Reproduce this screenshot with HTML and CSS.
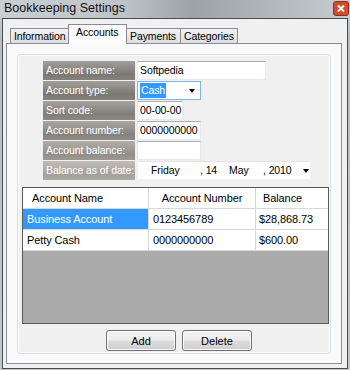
FILE: index.html
```html
<!DOCTYPE html>
<html lang="en">
<head>
    <meta charset="UTF-8">
    <title>Bookkeeping Settings</title>
    <link rel="stylesheet" href="styles.css">
</head>
<body>
    <div class="window">
        <div class="titlebar">
            <div class="title">Bookkeeping Settings</div>
            <div class="close">
                <svg width="8" height="7" viewBox="0 0 8 7">
                    <path d="M1 0.5 L7 6.5 M7 0.5 L1 6.5" stroke="#fff" stroke-width="2"/>
                </svg>
            </div>
        </div>
        <div class="frame">
            <div class="tabs">
                <div class="tab t-info">Information</div>
                <div class="tab t-acc active">Accounts</div>
                <div class="tab t-pay">Payments</div>
                <div class="tab t-cat">Categories</div>
            </div>
            <div class="page">
                <div class="group">
                    <div class="fields">
                        <div class="label l1">Account name:</div>
                        <div class="cell"><div class="input w-name">Softpedia</div></div>

                        <div class="label l2">Account type:</div>
                        <div class="cell">
                            <div class="input select">
                                <span class="sel">Cash</span>
                                <span class="arrow"></span>
                            </div>
                        </div>

                        <div class="label l3">Sort code:</div>
                        <div class="cell"><div class="input w-sort">00-00-00</div></div>

                        <div class="label l4">Account number:</div>
                        <div class="cell"><div class="input w-num">0000000000</div></div>

                        <div class="label l5">Account balance:</div>
                        <div class="cell"><div class="input w-num"></div></div>

                        <div class="label l6">Balance as of date:</div>
                        <div class="cell">
                            <div class="input date">
                                <span class="d-day">Friday</span>
                                <span class="d-num">, 14</span>
                                <span class="d-mon">May</span>
                                <span class="d-year">, 2010</span>
                                <span class="arrow"></span>
                            </div>
                        </div>
                    </div>

                    <div class="grid">
                        <div class="row head">
                            <div class="c c1">Account Name</div>
                            <div class="c c2 center">Account Number</div>
                            <div class="c c3">Balance</div>
                        </div>
                        <div class="row">
                            <div class="c c1 selected">Business Account</div>
                            <div class="c c2">0123456789</div>
                            <div class="c c3">$28,868.73</div>
                        </div>
                        <div class="row">
                            <div class="c c1">Petty Cash</div>
                            <div class="c c2">0000000000</div>
                            <div class="c c3">$600.00</div>
                        </div>
                        <div class="empty"></div>
                    </div>

                    <div class="buttons">
                        <button class="btn">Add</button>
                        <button class="btn">Delete</button>
                    </div>
                </div>
            </div>
        </div>
    </div>
</body>
</html>
```

FILE: styles.css
```css
*{
    margin: 0;
    padding: 0;
    box-sizing: border-box;
}
body{
    width: 350px;
    height: 370px;
    font-family: "Liberation Sans", Arial, sans-serif;
    font-size: 10.5px;
    letter-spacing: -0.1px;
    color: #000;
    background: #c4c9ce;
}
.window{
    width: 350px;
    height: 370px;
    background: linear-gradient(180deg, #cdd2d7, #b9bec4 40px, #c2c7cc);
    display: flex;
    flex-direction: column;
}
.titlebar{
    height: 18px;
    display: flex;
    justify-content: space-between;
    align-items: flex-start;
    padding-left: 4px;
    background: linear-gradient(90deg, #c9ced3 0%, #bfc4c9 35%, #9ca2a8 55%, #aab0b6 70%, #c7ccd1 100%);
}
.title{
    font-size: 12.5px;
    letter-spacing: 0;
    line-height: 17px;
    color: #111;
}
.close{
    flex: 0 0 16px;
    height: 15px;
    margin-top: 1px;
    margin-right: 1px;
    border: 1px solid #8a2f1f;
    border-radius: 3px;
    background-color: #d24b2e;
    display: flex;
    align-items: center;
    justify-content: center;
}
.frame{
    height: 351px;
    margin: 0 2px;
    border: 1px solid #4c4c4c;
    background: #f0f0f0;
    padding: 5px 5px 4px 3px;
    display: flex;
    flex-direction: column;
}
.tabs{
    display: flex;
    align-items: flex-end;
    padding-left: 4px;
    height: 19px;
    position: relative;
    z-index: 1;
}
.tab{
    height: 15px;
    border: 1px solid #898c95;
    border-bottom: none;
    border-right: none;
    background: linear-gradient(180deg, #f2f2f2, #dedede);
    line-height: 14px;
    padding-left: 3px;
}
.t-info{ width: 58px; }
.t-acc{ width: 59px; }
.t-pay{ width: 53px; }
.t-cat{ width: 58px; border-right: 1px solid #898c95; }
.tab.active{
    height: 20px;
    background: #fcfcfc;
    border-right: 1px solid #898c95;
    margin-bottom: -1px;
    padding-left: 7px;
    line-height: 15px;
}
.tab.active + .tab{ border-left: none; }
.page{
    flex: 1;
    border: 1px solid #898c95;
    background: #fafafa;
    padding: 10px 10px 9px 10px;
    display: flex;
}
.group{
    flex: 1;
    border: 1px solid #d5dfe5;
    border-radius: 3px;
    box-shadow: inset 0 0 0 1px #fff;
    background: #f0f0f0;
    padding: 6px 0 0 4px;
    display: flex;
    flex-direction: column;
}
.fields{
    margin-left: 21px;
    display: grid;
    grid-template-columns: 92px 174px;
    grid-auto-rows: 19px;
    row-gap: 1px;
    column-gap: 2px;
}
.label{
    color: #fff;
    padding-left: 3px;
    line-height: 19px;
    white-space: nowrap;
    overflow: hidden;
}
.l1{ background: linear-gradient(180deg, #a29e9a, #7b7773 70%, #86827e); }
.l2{ background: linear-gradient(180deg, #a29e9a, #7b7773 70%, #86827e); }
.l3{ background: linear-gradient(180deg, #a6a29e, #817d79 70%, #8c8884); }
.l4{ background: linear-gradient(180deg, #aaa6a2, #85817d 70%, #908c88); }
.l5{ background: linear-gradient(180deg, #b2aeaa, #928e8a 70%, #9c9894); }
.l6{ background: linear-gradient(180deg, #c0bcb8, #a4a09c 70%, #aca8a4); }
.cell{
    display: flex;
    align-items: stretch;
}
.input{
    height: 19px;
    background: #fff;
    border: 1px solid #e3e9ef;
    border-top-color: #abadb3;
    padding-left: 2px;
    line-height: 17px;
    white-space: nowrap;
}
.w-name{ width: 129px; }
.w-sort{ width: 46px; }
.w-num{ width: 64px; }
.select{
    width: 64px;
    border-color: #7eb4ea;
    display: flex;
    justify-content: space-between;
    align-items: center;
    padding: 0 5px 0 2px;
}
.sel{
    background: #3399ff;
    color: #fff;
    line-height: 15px;
    padding: 0 1px;
}
.arrow{
    width: 0;
    height: 0;
    border-left: 3.5px solid transparent;
    border-right: 3.5px solid transparent;
    border-top: 4px solid #000;
}
.date{
    width: 174px;
    border-color: #f0f0f0;
    border-top-color: #e3e3e3;
    display: flex;
    align-items: center;
    padding-left: 13px;
}
.d-day{ width: 49px; }
.d-num{ width: 29px; }
.d-mon{ width: 34px; }
.d-year{ width: 40px; }
.grid{
    margin-top: 7px;
    width: 307px;
    height: 137px;
    border: 1px solid #5a5a5a;
    background: #ababab;
    display: flex;
    flex-direction: column;
}
.row{
    display: flex;
    height: 21px;
    background: #fff;
    border-bottom: 1px solid #d8d8d8;
}
.c{
    line-height: 20px;
    padding-left: 4px;
    border-right: 1px solid #d8d8d8;
    white-space: nowrap;
    font-size: 11px;
}
.c1{ width: 126px; }
.c2{ width: 107px; }
.c3{ flex: 1; border-right: none; padding-left: 3px; }
.head .c1{ padding-left: 9px; }
.head .c3{ padding-left: 7px; }
.center{ text-align: center; padding-left: 0; }
.selected{
    background: #3399ff;
    color: #fff;
}
.empty{ flex: 1; }
.buttons{
    display: flex;
    justify-content: center;
    gap: 6px;
    margin-top: 6px;
    padding-left: 6px;
}
.btn{
    width: 70px;
    height: 21px;
    border: 1px solid #707070;
    border-radius: 3px;
    background: linear-gradient(180deg, #f2f2f2 0%, #ebebeb 48%, #dddddd 52%, #cfcfcf 100%);
    box-shadow: inset 0 0 0 1px #fcfcfc;
    font-family: "Liberation Sans", Arial, sans-serif;
    font-size: 11px;
    color: #000;
}
```
